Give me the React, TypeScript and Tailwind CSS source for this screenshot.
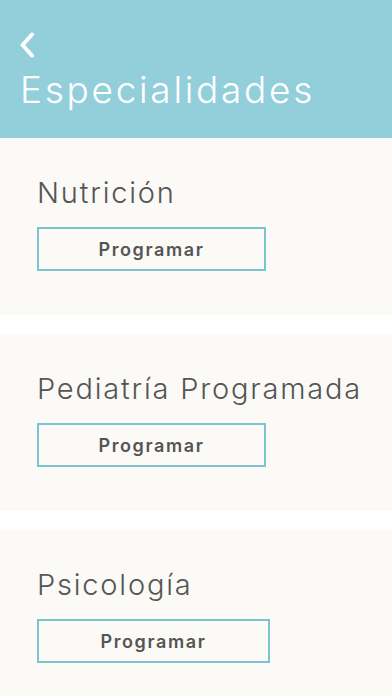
import type {FunctionComponent} from 'react';

const specialties = [
    {name: 'Nutrición', wide: false},
    {name: 'Pediatría Programada', wide: false},
    {name: 'Psicología', wide: true},
];

const font = {fontFamily: 'Inter, "Noto Sans", sans-serif'};

const SpecialtyCard: FunctionComponent<{name: string; wide: boolean}> = ({name, wide}) => (
    <div className="h-[177px] shrink-0 bg-[#fbfaf6] px-[37px] pt-[38px]">
        <h2 className="text-[29px] leading-[34px] font-light tracking-[1.8px] text-[#555555] whitespace-nowrap">
            {name}
        </h2>
        <button
            type="button"
            className={`mt-[17px] flex h-[44px] items-center justify-center border-2 border-[#7cc4d0] text-[18px] font-semibold tracking-[1.6px] text-[#555555] ${wide ? 'w-[233px]' : 'w-[229px]'}`}
        >
            Programar
        </button>
    </div>
);

export default function App() {
    return (
        <div className="flex h-[696px] w-[392px] flex-col overflow-hidden bg-white" style={font}>
            <header className="h-[138px] shrink-0 bg-[#93cfdb] px-5 pt-[32px]">
                <svg width="16" height="26" viewBox="0 0 16 26" fill="none" className="-ml-[1px]">
                    <path d="M13 2.5 L3.5 13 L13 23.5" stroke="white" strokeWidth="4" strokeLinecap="round" strokeLinejoin="round" />
                </svg>
                <h1 className="mt-[10px] text-[37px] leading-[44px] font-light tracking-[2.7px] text-white whitespace-nowrap">
                    Especialidades
                </h1>
            </header>
            <main className="flex flex-col gap-[19px]">
                {specialties.map(item => (
                    <SpecialtyCard key={item.name} name={item.name} wide={item.wide} />
                ))}
            </main>
        </div>
    );
}
